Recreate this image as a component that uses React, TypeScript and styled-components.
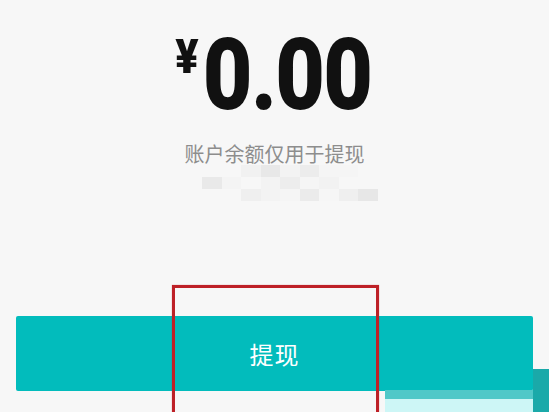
import styled, { createGlobalStyle } from 'styled-components'

const GlobalStyle = createGlobalStyle`
html, body {
  margin: 0;
  padding: 0;
  background: #f7f7f7;
}
body {
  font-family: 'Noto Sans CJK SC', 'Noto Sans', sans-serif;
  overflow: hidden;
}
`

// pixelated (censored) strip under the note, one grey per cell
const mosaicRows = [
  ['#f7f7f7', '#f7f7f7', '#f1f1f1', '#e8e8e8', '#f3f3f3', '#ececec', '#f5f5f5', '#f5f5f5', '#f7f7f7'],
  ['#e9e9e9', '#f4f4f4', '#f7f7f7', '#f3f3f3', '#ededed', '#f5f5f5', '#f2f2f2', '#f7f7f7', '#f7f7f7'],
  ['#f7f7f7', '#f7f7f7', '#efefef', '#f3f3f3', '#f5f5f5', '#ebebeb', '#f6f6f6', '#efefef', '#e7e7e7'],
]

const Page = styled.div`
position: relative;
width: 549px;
height: 412px;
overflow: hidden;
display: flex;
flex-direction: column;
align-items: center;
padding-top: 24px;
box-sizing: border-box;
`

const Amount = styled.div`
display: flex;
align-items: flex-start;
justify-content: center;
color: #111;
font-family: Roboto, 'Liberation Sans', sans-serif;
font-weight: 900;
line-height: 1;
.yen {
  font-size: 48px;
  margin-top: 9px;
  transform: scaleX(0.9);
}
.value {
  font-size: 101px;
  letter-spacing: -2px;
  transform: scaleX(0.85);
  margin-left: -12px;
  margin-right: -12px;
}
`

const Note = styled.div`
margin-top: 17px;
font-size: 20px;
line-height: 24px;
color: #8d8d8d;
`

const Mosaic = styled.div`
margin: -1px 0 0 31px;
display: grid;
grid-template-columns: repeat(9, 19.5px);
grid-auto-rows: 12px;
filter: blur(0.6px);
`

const Cell = styled.div<{ $tone: string }>`
background: ${p => p.$tone};
`

const WithdrawButton = styled.button`
margin-top: 115px;
width: 517px;
height: 75px;
border: none;
border-radius: 2px;
background: #02bcbc;
color: #fff;
font-family: 'Noto Sans CJK SC', sans-serif;
font-size: 24px;
letter-spacing: 1px;
display: flex;
align-items: center;
justify-content: center;
padding: 0;
`

// red annotation box drawn over the screenshot
const Highlight = styled.div`
position: absolute;
left: 172px;
top: 285px;
width: 201px;
height: 200px;
border: 3px solid #be2127;
box-shadow: 0 0 1px rgba(190, 33, 39, 0.5);
`

// leftover of another screenshot pasted at the corner
const CornerScrap = styled.div`
position: absolute;
left: 385px;
top: 390px;
width: 148px;
height: 22px;
display: flex;
flex-direction: column;
.edge {
  height: 9px;
  background: #50c8c8;
}
.fill {
  flex: 1;
  background: #cdf6f6;
}
`

const SideScrap = styled.div`
position: absolute;
left: 533px;
top: 369px;
width: 16px;
height: 43px;
background: #1aa9a9;
`

export default function App() {
  return (
    <>
      <GlobalStyle />
      <Page>
        <Amount>
          <span className="yen">¥</span>
          <span className="value">0.00</span>
        </Amount>
        <Note>账户余额仅用于提现</Note>
        <Mosaic>
          {mosaicRows.map((row, r) =>
            row.map((tone, c) => <Cell key={`${r}-${c}`} $tone={tone} />)
          )}
        </Mosaic>
        <WithdrawButton>提现</WithdrawButton>
        <Highlight />
        <CornerScrap>
          <div className="edge" />
          <div className="fill" />
        </CornerScrap>
        <SideScrap />
      </Page>
    </>
  )
}
